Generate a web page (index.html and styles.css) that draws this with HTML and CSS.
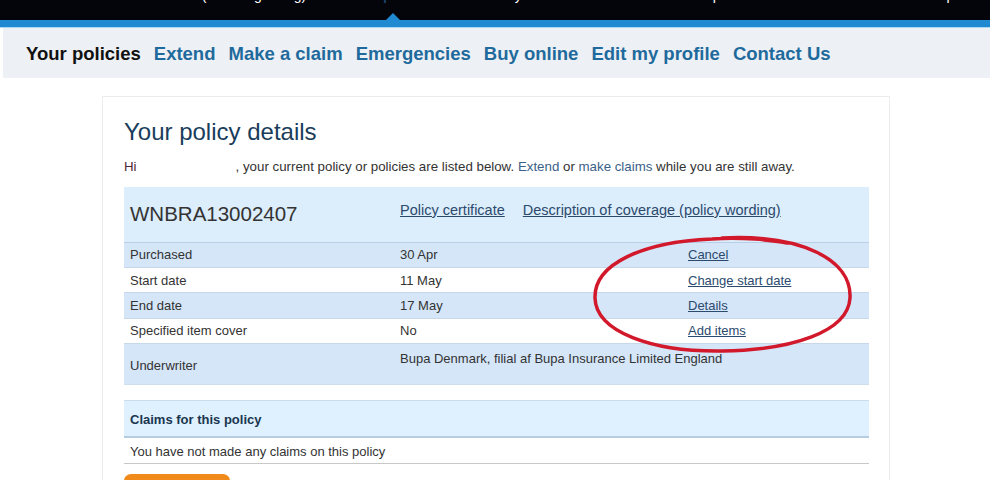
FILE: index.html
```html
<!DOCTYPE html>
<html>
<head>
<meta charset="utf-8">
<link rel="stylesheet" href="styles.css">
</head>
<body>
<div class="page">
  <div class="topbar">
    <div class="toptext">
      <span class="t1">Travel insurance (including skiing)</span>
      <span class="t2 active">Your policies</span>
      <span class="t3">Holiday</span>
      <span class="t4">Help</span>
      <span class="t5">Help</span>
    </div>
    <span class="pointer"></span>
  </div>
  <div class="stripe"></div>
  <nav class="nav">
    <span class="nav-item current">Your policies</span>
    <a class="nav-item">Extend</a>
    <a class="nav-item">Make a claim</a>
    <a class="nav-item">Emergencies</a>
    <a class="nav-item">Buy online</a>
    <a class="nav-item">Edit my profile</a>
    <a class="nav-item">Contact Us</a>
  </nav>

  <div class="card">
    <h1 class="title">Your policy details</h1>
    <p class="intro"><span class="hi">Hi</span><span class="name"></span>, your current policy or policies are listed below. <a class="ilink">Extend</a> or <a class="ilink">make claims</a> while you are still away.</p>

    <table class="policy">
      <colgroup><col class="c1"><col class="c2"><col class="c3"></colgroup>
      <tr class="head">
        <td class="pnum">WNBRA13002407</td>
        <td colspan="2" class="docs"><a class="ul">Policy certificate</a><a class="ul">Description of coverage (policy wording)</a></td>
      </tr>
      <tr class="blue"><td>Purchased</td><td>30 Apr</td><td><a class="ul">Cancel</a></td></tr>
      <tr><td>Start date</td><td>11 May</td><td><a class="ul">Change start date</a></td></tr>
      <tr class="blue"><td>End date</td><td>17 May</td><td><a class="ul">Details</a></td></tr>
      <tr><td>Specified item cover</td><td>No</td><td><a class="ul">Add items</a></td></tr>
      <tr class="blue tall"><td>Underwriter</td><td class="top">Bupa Denmark, filial af Bupa Insurance Limited England</td><td></td></tr>
    </table>

    <div class="claims">
      <div class="claims-head">Claims for this policy</div>
      <div class="claims-row">You have not made any claims on this policy</div>
    </div>
    <div class="btn"></div>
  </div>

  <svg class="circle" width="300" height="150" viewBox="0 0 300 150">
    <path d="M150 18 C 230 14, 280 40, 278 78 C 276 112, 220 130, 150 131 C 80 132, 24 112, 23 78 C 22 44, 70 22, 140 19 C 170 17, 200 20, 215 23" fill="none" stroke="#d2182b" stroke-width="3.5" stroke-linecap="round"/>
  </svg>
</div>
</body>
</html>
```

FILE: styles.css
```css
* { box-sizing: border-box; }
html, body { margin: 0; padding: 0; background: #fff; }
body { font-family: "Liberation Sans", Arial, sans-serif; color: #333; }
.page { position: relative; width: 990px; height: 480px; overflow: hidden; }

.topbar { position: relative; height: 20px; background: #03050b; overflow: hidden; }
.toptext { display: flex; margin-top: -12px; font-size: 14px; line-height: 14px; color: #fff; white-space: nowrap; }
.t1 { margin-left: 95px; }
.t2 { margin-left: 42px; color: #1c3f6e; font-weight: bold; }
.t3 { margin-left: 40px; }
.t4 { margin-left: 170px; }
.t5 { margin-left: 205px; }
.pointer { position: absolute; left: 386px; top: 13px; width: 0; height: 0; border-left: 7px solid transparent; border-right: 7px solid transparent; border-bottom: 7px solid #1f89d2; }

.stripe { height: 8px; background: #1f89d2; border-bottom: 1px solid #a9daf4; }

.nav { margin-left: 3px; height: 50px; background: #edf1f5; display: flex; align-items: center; gap: 13px; padding-left: 23px; padding-top: 2px; }
.nav-item { font-size: 18.5px; font-weight: bold; color: #1f6a9c; text-decoration: none; white-space: nowrap; }
.nav-item.current { color: #111; }

.card { margin: 18px 0 0 102px; width: 788px; height: 420px; border: 1px solid #ececec; padding: 21px 21px 0 21px; }
.title { margin: 0; font-size: 24px; line-height: 28px; font-weight: normal; color: #1a3d5c; }
.intro { margin: 13px 0 0 0; font-size: 13.3px; line-height: 16px; color: #333; white-space: nowrap; }
.hi { color: #4e2632; }
.name { display: inline-block; width: 99px; }
.ilink { color: #3b5f88; text-decoration: none; }

.policy { margin-top: 12px; width: 745px; border-collapse: collapse; font-size: 13px; table-layout: fixed; }
.policy col.c1 { width: 270px; }
.policy col.c2 { width: 288px; }
.policy col.c3 { width: 187px; }
.policy td { padding: 0 6px; height: 25.4px; vertical-align: middle; border-bottom: 1px solid #c6d8ea; color: #333; white-space: nowrap; }
.policy tr.head td { height: 55px; background: #dcedfb; border-bottom: 1px solid #b8cfe5; }
.policy tr.head td.docs { padding-bottom: 9px; }
.policy tr.blue td { background: #d5e6f8; }
.policy tr.tall td { height: 41px; border-bottom: 1px solid #cfdeec; padding-top: 2px; }
.policy tr.tall td.top { vertical-align: top; padding-top: 7px; overflow: visible; }
.pnum { font-size: 20.5px; color: #1a3d5c; padding-bottom: 3px; }
.docs .ul { font-size: 14.5px; margin-right: 18px; }
.ul { color: #2b4a6e; text-decoration: underline; }

.claims { margin-top: 15px; width: 745px; }
.claims-head { height: 38px; background: #dff1fe; border-top: 1px solid #c9dcec; border-bottom: 2px solid #b6cde1; padding: 11px 6px 0; font-size: 13px; font-weight: bold; color: #1a3550; }
.claims-row { height: 26px; border-bottom: 1px solid #c8c8c8; padding: 6px 6px 0; font-size: 13px; color: #333; }
.btn { margin-top: 10px; width: 106px; height: 20px; background: #f08a1a; border-radius: 7px 7px 0 0; }

.circle { position: absolute; left: 572px; top: 220px; }
```
